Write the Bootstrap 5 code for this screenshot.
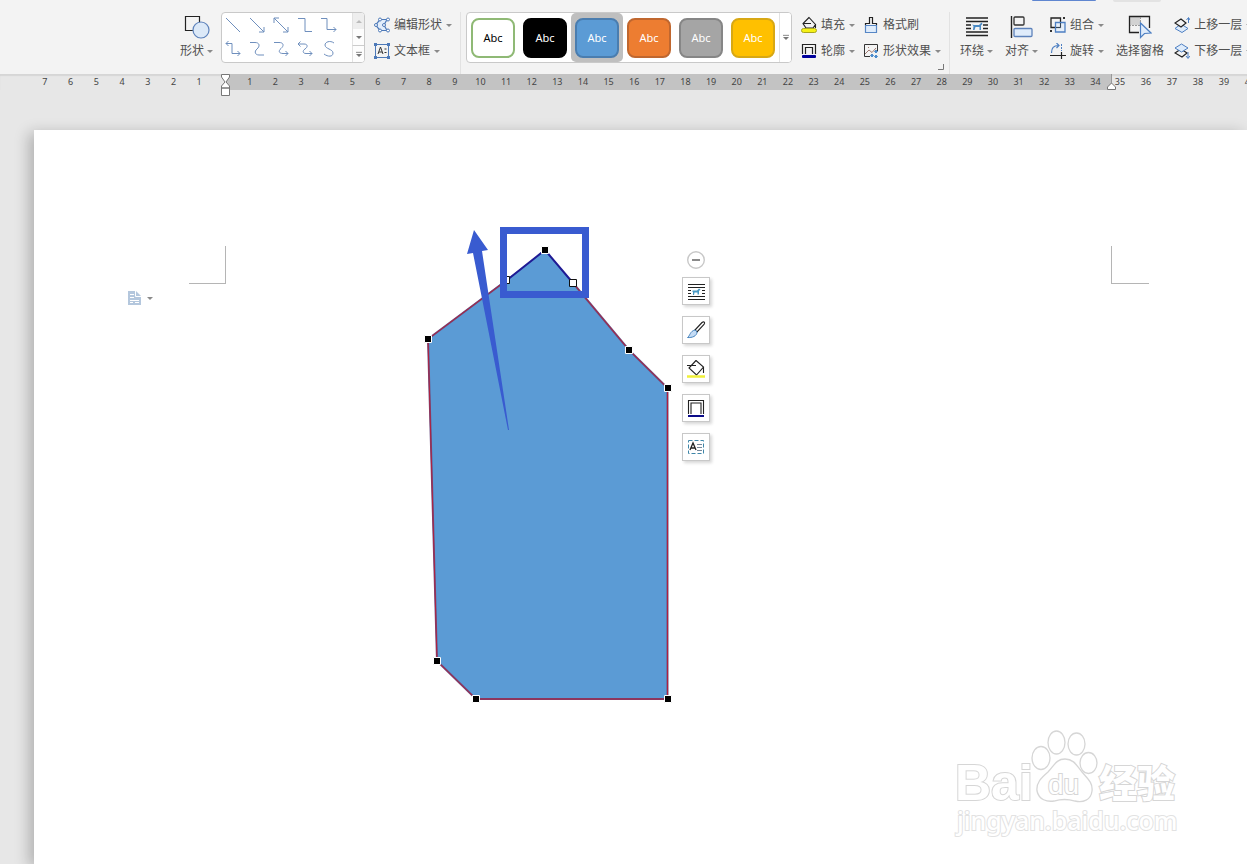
<!DOCTYPE html>
<html lang="zh-CN">
<head>
<meta charset="utf-8">
<meta name="viewport" content="width=device-width, initial-scale=1">
<title>文档</title>
<link rel="stylesheet" href="https://cdn.jsdelivr.net/npm/bootstrap@5.3.0/dist/css/bootstrap.min.css">
<style>
  body { background: #e7e7e7; font-family: "Liberation Sans", "Noto Sans CJK SC", sans-serif; font-size: 12px; color: #505050; overflow: hidden; }
  button { font: inherit; color: inherit; }
  svg { display: block; flex: none; fill: none; }
  .ribbon { background: #f3f3f3; height: 74px; padding: 12px 0 0 180px; overflow: hidden; }
  .ribbon > * { flex: none; }
  .sp5 { margin-left: 5px; } .sp8 { margin-left: 8px; } .sp9 { margin-left: 9px; } .sp10 { margin-left: 10px; } .sp12 { margin-left: 12px; }
  .tool { --bs-btn-font-size: 12px; --bs-btn-color: #505050; --bs-btn-padding-x: 0; --bs-btn-padding-y: 0; border: 0; border-radius: 0; line-height: 18px; white-space: nowrap; }
  .tool-row { display: flex; align-items: center; gap: 4px; height: 26px; }
  .tool-big { display: flex; flex-direction: column; align-items: center; gap: 3px; padding-top: 1px; }
  .tool-big span { display: flex; align-items: center; gap: 3px; }
  .caret::after { content: ""; border: 3px solid transparent; border-top-color: #8a8a8a; border-bottom: 0; }
  .rule { width: 1px; height: 62px; background: #e2e2e2; }
  .gallery { background: #fff; border: 1px solid #c9c9c9; border-radius: 4px; height: 51px; overflow: hidden; }
  .lines { width: 144px; }
  .line-grid { display: grid; grid-template-columns: repeat(5, 24px); grid-auto-rows: 24px; stroke: #6f8fbd; }
  .line-grid button { border: 0; padding: 0 2px 0 0; background: none; display: grid; place-items: center; }
  .scroller { width: 12px; background: #f6f6f6; display: flex; flex-direction: column; }
  .scroller button { flex: 1; border: 0; padding: 0; background: #fdfdfd; border-left: 1px solid #e2e2e2; display: grid; place-items: center; }
  .scroller button:first-child { background: #eee; }
  .scroller button:last-child { border-top: 1px solid #ccc; }
  .styles { width: 326px; }
  .styleset { display: grid; grid-template-columns: repeat(6, 52px); font-family: "Noto Sans", sans-serif; font-size: 11px; }
  .slot { border: 0; padding: 0; background: none; display: grid; place-items: center; border-radius: 5px; }
  .slot.on { background: #bfbfbf; }
  .chip { width: 44px; height: 40px; border-radius: 8px; border: 2px solid; line-height: 36px; color: #fff; }
  .c-green { background: #fff; border-color: #8fb975; color: #000; } .c-black { background: #000; border-color: #000; }
  .c-blue { background: #5b9bd5; border-color: #4a7daf; } .c-orange { background: #ed7d31; border-color: #c0672f; }
  .c-grey { background: #a5a5a5; border-color: #868686; } .c-gold { background: #ffc000; border-color: #d8a814; }
  .tab-bits { top: 0; right: 86px; gap: 17px; }
  .tab-bits i { width: 48px; height: 2px; background: #e3e3e3; border-radius: 0 0 6px 6px; }
  .tab-bits i:first-child { width: 64px; height: 1px; background: #5f86d0; }
  .launcher { left: 938px; top: 64px; }

  .ruler { height: 16px; font-family: "Noto Sans", sans-serif; font-size: 9px; line-height: 16px; box-shadow: inset 0 2px 1px #d6d6d6; overflow: visible; }
  .ruler span { flex: 1 1 0; text-align: center; color: #444; }
  .r-left { width: 225px; padding: 0 13px 0 32px; }
  .r-mid { width: 886px; padding: 0 3px 0 12px; background: #c3c3c3; }
  .r-right { flex: 1; min-width: 0; overflow: hidden; }
  .ruler .r-right span { flex: 0 0 26px; }
  .ruler .r-right span:first-child { margin-left: -4px; }
  .m-indent { left: 220px; top: 0; } .m-end { left: 1106px; top: 0; }

  .sheet { margin: 40px 0 0 34px; background: #fff; box-shadow: -5px 3px 14px rgba(0,0,0,.24); }
  .corner { width: 38px; height: 38px; border: 0 solid #b5b5b5; top: 116px; }
  .corner.tl { left: 155px; width: 37px; border-width: 0 1px 1px 0; }
  .corner.tr { left: 1077px; border-width: 0 0 1px 1px; }
  .paste { left: 93px; top: 155px; }
  .drawing { left: 380px; top: 90px; }
  .float-tools { left: 648px; top: 121px; }
  .float-tools .sq { width: 28px; height: 28px; margin-bottom: 11px; padding: 0; border: 1px solid #c8c8c8; background: #fff; display: grid; place-items: center; box-shadow: 2px 2px 3px rgba(0,0,0,.16); }
  .float-tools .round { border: 0; padding: 0; background: none; margin-bottom: 8px; }
  .logo { left: 916px; top: 590px; }
</style>
</head>
<body class="d-flex flex-column vh-100">
<svg width="0" height="0" class="position-absolute" aria-hidden="true">
  <symbol id="wrap" viewBox="0 0 22 20"><path d="M0 1.500h22M0 5h22M0 15.500h22M0 19h22M0 8.500h5M0 12h5M17 8.500h5M17 12h5" stroke="#222" stroke-width="1.300"/><path d="M6 8l2 .5h5l2.500-2.500 1 1.500-1.500 1.500v4.500h-1.500v-3h-4l-1 3H7l.5-4z" fill="#4a8ac4"/></symbol>
  <symbol id="more" viewBox="0 0 7 7"><path d="M0 1h7" stroke="#777"/><path d="M0 3h7L3.500 6.500z" fill="#777"/></symbol>
</svg>

<header class="ribbon d-flex align-items-start position-relative">
  <div class="tab-bits position-absolute d-flex"><i></i><i></i></div>
  <button class="btn tool tool-big">
    <svg width="26" height="26"><path d="M1.500 3.500h14v14h-14z" stroke="#222" stroke-width="1.200"/><circle cx="17" cy="17" r="8" fill="#dce9f8" stroke="#5d82bb" stroke-width="1.200"/></svg>
    <span class="caret">形状</span></button>
  <div class="gallery lines sp8 d-flex justify-content-between">
    <div class="line-grid">
      <button aria-label="直线"><svg width="16" height="16"><path d="M1 1l14 14"/></svg></button>
      <button aria-label="箭头"><svg width="16" height="16"><path d="M1 1l14 14M15 10v5h-5"/></svg></button>
      <button aria-label="双箭头"><svg width="16" height="16"><path d="M1 1l14 14M15 10v5h-5M1 6V1h5"/></svg></button>
      <button aria-label="肘形"><svg width="16" height="16"><path d="M1 1.500h7v13h7"/></svg></button>
      <button aria-label="肘形箭头"><svg width="16" height="16"><path d="M0 1.500h6v11h9M12.500 10l2.500 2.500-2.500 2.500"/></svg></button>
      <button aria-label="肘形双箭头"><svg width="16" height="16"><path d="M1 2.500h6v10h8M12.500 10l2.500 2.500-2.500 2.500M3.500 0L1 2.500 3.500 5"/></svg></button>
      <button aria-label="曲线"><svg width="16" height="16"><path d="M1 1.500h5c5 0 5 4 2 6.500s-2 6 2 6h5"/></svg></button>
      <button aria-label="曲线箭头"><svg width="16" height="16"><path d="M1 1.500h5c5 0 5 3.500 2 6s-2 5 2 5h5M12.500 10l2.500 2.500-2.500 2.500"/></svg></button>
      <button aria-label="曲线双箭头"><svg width="16" height="16"><path d="M1 3h6c4 0 4 3 1 5s-2 4.500 1 4.500h6M12.500 10l2.500 2.500-2.500 2.500M3.500.5L1 3l2.500 2.500"/></svg></button>
      <button aria-label="自由曲线"><svg width="16" height="16"><path d="M13 2C9-1 4 1 4 4c0 4 8 4 8 8s-5 4-9 1"/></svg></button>
    </div>
    <div class="scroller">
      <button aria-label="向上"><svg width="6" height="3"><path d="M0 3h6L3 0z" fill="#bbb"/></svg></button>
      <button aria-label="向下"><svg width="6" height="3"><path d="M0 0h6L3 3z" fill="#777"/></svg></button>
      <button aria-label="更多"><svg width="6" height="7"><use href="#more"/></svg></button>
    </div>
  </div>
  <div class="sp9">
    <button class="btn tool tool-row caret"><svg width="16" height="16"><path d="M13 2.500L6 2.500 1.500 8 6 13.500h7L10 8z" stroke="#4d79b8" stroke-width="1.200" fill="#e3eefb"/><g fill="#fff" stroke="#4d79b8"><circle cx="14" cy="2.500" r="1.500"/><circle cx="6" cy="2.500" r="1.500"/><circle cx="2" cy="8" r="1.500"/><circle cx="6" cy="13.500" r="1.500"/><circle cx="14" cy="13.500" r="1.500"/><circle cx="10" cy="8" r="1.500"/></g></svg>编辑形状</button>
    <button class="btn tool tool-row caret"><svg width="16" height="16"><path d="M1.500 1.500h13v13h-13z" stroke="#4d79b8"/><path d="M0 0h3v3H0zM13 0h3v3h-3zM0 13h3v3H0zM13 13h3v3h-3z" fill="#4d79b8"/><path d="M4 11l2.500-7L9 11M5 9h3M10.500 6h2M10.500 9.500h2" stroke="#333"/></svg>文本框</button>
  </div>
  <div class="rule sp8"></div>
  <div class="gallery styles sp5 d-flex">
    <div class="styleset">
      <button class="slot"><span class="chip c-green">Abc</span></button>
      <button class="slot"><span class="chip c-black">Abc</span></button>
      <button class="slot on"><span class="chip c-blue">Abc</span></button>
      <button class="slot"><span class="chip c-orange">Abc</span></button>
      <button class="slot"><span class="chip c-grey">Abc</span></button>
      <button class="slot"><span class="chip c-gold">Abc</span></button>
    </div>
    <div class="scroller"><button aria-label="更多样式" class="border-top-0 bg-white"><svg width="6" height="7"><use href="#more"/></svg></button></div>
  </div>
  <div class="sp9">
    <button class="btn tool tool-row caret"><svg width="16" height="18"><path d="M8 1.500L2 7.500 5 12h7l2.500-3.500zM2 7.500h8M14.500 8v4" stroke="#222" stroke-width="1.100"/><rect x=".5" y="12.500" width="15" height="4" rx="2" fill="#f5f116" stroke="#a9a61d"/></svg>填充</button>
    <button class="btn tool tool-row caret"><svg width="16" height="16"><path d="M1.500 11V1.500h13V11M4.500 11V4.500h7V11" stroke="#222" stroke-width="1.200"/><rect x="1" y="12" width="14" height="3" rx="1" fill="#00009c"/></svg>轮廓</button>
  </div>
  <div class="sp8">
    <button class="btn tool tool-row"><svg width="16" height="18"><path d="M2.500 9V7.500h4V1.500h3v6h4V9" stroke="#222" stroke-width="1.200"/><path d="M2.500 9.500h11v7h-11z" fill="#dfecfb" stroke="#5686c5" stroke-width="1.200"/></svg>格式刷</button>
    <button class="btn tool tool-row caret"><svg width="16" height="16"><path d="M7 13.500H1.500v-12h13V8" stroke="#333"/><path d="M2 11l4-4 3 2.500L13 5M5 4.500h1" stroke="#a07a70"/><path d="M13 7l1.500 1.500L13 10l-1.500-1.500zM9 11l1.500 1.500L9 14l-1.500-1.500zM13 12l1.500 1.500L13 15l-1.500-1.500z" fill="#4c8ccc" stroke="#4c8ccc"/></svg>形状效果</button>
  </div>
  <svg class="launcher position-absolute" width="7" height="7"><path d="M5.500 0v5.500H0" stroke="#777"/></svg>
  <div class="rule sp8"></div>
  <button class="btn tool tool-big sp10"><svg width="22" height="26"><use href="#wrap" y="3" width="22" height="21"/></svg><span class="caret">环绕</span></button>
  <button class="btn tool tool-big sp12"><svg width="23" height="26"><path d="M1.500 3v22" stroke="#222" stroke-width="1.400"/><rect x="4" y="4" width="10" height="8" rx="1" stroke="#333" stroke-width="1.300"/><rect x="4" y="15.500" width="18" height="8" rx="1" fill="#dfecfb" stroke="#5d82bb" stroke-width="1.300"/></svg><span class="caret">对齐</span></button>
  <div class="sp12">
    <button class="btn tool tool-row caret"><svg width="16" height="16"><path d="M1 1h9.500v9.500H1z" stroke="#222" stroke-width="1.300"/><path d="M5.500 5.500H15V15H5.500z" fill="#dfecfb" fill-opacity=".7" stroke="#4d7fc2" stroke-width="1.300"/><path d="M6 10.500h4.500V6" stroke="#345"/><path d="M13 0h2v2h-2zM0 13h2v2H0z" fill="#333"/></svg>组合</button>
    <button class="btn tool tool-row caret"><svg width="16" height="16"><path d="M1.500 10c0-5 2-7.500 7-7.500M6.500 0l2.500 2.500L6.500 5" stroke="#4d7fc2" stroke-width="1.200"/><path d="M0 12.500h16M11.500 9v7" stroke="#222" stroke-width="1.200"/><path d="M11.500 1v7" stroke="#4d7fc2" stroke-dasharray="2 1"/></svg>旋转</button>
  </div>
  <button class="btn tool tool-big sp12"><svg width="24" height="26"><path d="M2 4h10v8H2z" fill="#d2d2d2"/><path d="M11 19.500H1.500v-16h20V15" stroke="#222" stroke-width="1.300"/><path d="M12.500 4v8.500H2" stroke="#999" stroke-dasharray="2 1"/><path d="M12.500 10v14.500l4-4 6.500-.5z" fill="#dfecfb" stroke="#4d7fc2" stroke-width="1.200"/></svg><span>选择窗格</span></button>
  <div class="sp10">
    <button class="btn tool tool-row caret"><svg width="16" height="16"><path d="M7 7l7 4.500-6 4-7-4z" fill="#dfecfb" stroke="#4d7fc2"/><path d="M7 2l5 4-5 4-6-4z" fill="#f3f3f3" stroke="#222" stroke-width="1.200"/><path d="M14.500 6V1M12.500 3l2-2.500L16 3" stroke="#4d7fc2"/></svg>上移一层</button>
    <button class="btn tool tool-row caret"><svg width="16" height="16"><path d="M7 6l6 4-5 4-7-4z" fill="#f3f3f3" stroke="#222" stroke-width="1.200"/><path d="M7.500 1l6.500 4-6.500 4L1 5z" fill="#dfecfb" stroke="#4d7fc2"/><path d="M14 9v6M12 13l2 2.500 2-2.500" stroke="#4d7fc2"/></svg>下移一层</button>
  </div>
</header>

<div class="ruler d-flex position-relative">
  <div class="r-left d-flex" data-from="7" data-to="1"></div>
  <div class="r-mid d-flex" data-from="1" data-to="34"></div>
  <div class="r-right d-flex" data-from="35" data-to="40"></div>
  <svg class="m-indent position-absolute" width="11" height="23"><path d="M1.500.5h8v2.500L6 8l3.500 4v2h-8v-2L5 8 1.500 3zM1.500 14h8v7.500h-8z" fill="#fff" stroke="#777"/></svg>
  <svg class="m-end position-absolute" width="11" height="17"><path d="M5.500 0v9" stroke="#999"/><path d="M1.500 15.500v-2.500l4-4 4 4v2.500z" fill="#fff" stroke="#777"/></svg>
</div>

<main class="sheet flex-fill position-relative">
  <div class="corner tl position-absolute"></div>
  <div class="corner tr position-absolute"></div>
  <button class="btn tool tool-row caret paste position-absolute" aria-label="段落布局"><svg width="16" height="16"><path d="M1 1h8l5 5v9H1z" fill="#b4c7dd"/><path d="M8.500 1v5.500H14M3 4.500h4M3 7.500h4M3 10.500h9M3 12.500h3M8 12.500h4" stroke="#fff"/></svg></button>

  <svg class="drawing position-absolute" width="320" height="500" viewBox="414 220 320 500">
    <path d="M428 339L545 250 573 283 629 350 668 388V699H476L437 661Z" fill="#5b9bd5"/>
    <path d="M507 280L428 339 437 661 476 699H667.500V388L629 350 573 283" stroke="#6b4f80" stroke-width="2"/>
    <path d="M507 280L428 339 437 661 476 699H667.500V388L629 350 573 283" stroke="#b0213f"/>
    <path d="M507 280L545 250 573 283" stroke="#1f1a94" stroke-width="2"/>
    <path d="M503.500 276.500h6v7h-6zM569.500 279.500h7v7h-7z" fill="#fff" stroke="#111"/>
    <path d="M503.500 230.500h82v64h-82z" stroke="#395bd0" stroke-width="7"/>
    <path d="M474 230L488 250 482 251 509 430 508 430 473 253 467 254Z" fill="#395bd0"/>
    <g fill="#000" stroke="#fff"><path d="M541.500 246.500h7v7h-7zM424.500 335.500h7v7h-7zM625.500 346.500h7v7h-7zM664.500 384.500h7v7h-7zM664.500 695.500h7v7h-7zM472.500 695.500h7v7h-7zM433.500 657.500h7v7h-7z"/></g>
  </svg>

  <div class="float-tools position-absolute d-flex flex-column align-items-center">
    <button class="round" aria-label="收起"><svg width="18" height="18"><circle cx="9" cy="9" r="8.300" stroke="#c8c8c8" stroke-width="1.400"/><path d="M5 9h8" stroke="#8a8a8a" stroke-width="2"/></svg></button>
    <button class="sq" aria-label="环绕"><svg width="17" height="17"><path d="M0 1.500h17M0 4.500h17M0 13.500h17M0 16.500h17M0 7.500h3M0 10.500h3M14 7.500h3M14 10.500h3" stroke="#222"/><path d="M4 8l1-.5h4l2-2 1.500 1-1.500 1.500v3.500H9.500V9.500h-3L6 12H5V9z" fill="#4a9ac4"/></svg></button>
    <button class="sq" aria-label="样式"><svg width="20" height="20"><path d="M9 10l7-7.500c2-1.500 3.500 0 2 2L11 12z" stroke="#222" stroke-width="1.100"/><path d="M9 10l2 2c0 4-5 6-9.500 5.500C4 16 4 11 9 10z" fill="#c5dcf5" stroke="#4784bd"/></svg></button>
    <button class="sq" aria-label="填充"><svg width="20" height="20"><path d="M10 1.500l7.500 6.500-7 8L3 9l7-7.500M1 6.500h9M17.500 8v6" stroke="#222" stroke-width="1.100"/><path d="M1 17.500h18" stroke="#f0f03a" stroke-width="2.500"/></svg></button>
    <button class="sq" aria-label="轮廓"><svg width="18" height="18"><path d="M1.500 15V1.500h15V15M4 15V4h10v11" stroke="#222" stroke-width="1.100"/><path d="M1 17h16" stroke="#0b0b88" stroke-width="2"/></svg></button>
    <button class="sq" aria-label="文本框"><svg width="18" height="16"><path d="M1.500 1.500h15v13h-15z" stroke="#3f86a8" stroke-dasharray="4 2"/><path d="M3 11l3-7 3 7M4 9h4" stroke="#222" stroke-width="1.300"/><path d="M10 5.500h5M10 8.500h5M10 11.500h5" stroke="#789"/></svg></button>
  </div>

  <svg class="logo position-absolute" width="250" height="124" viewBox="950 720 250 124" font-weight="700">
    <g fill="#fff" stroke="#d6d6d6" stroke-width="1.300">
      <ellipse cx="1041" cy="758" rx="9" ry="11.500"/><ellipse cx="1056.500" cy="742.500" rx="8.500" ry="11.500"/><ellipse cx="1076.500" cy="744" rx="8.500" ry="11"/><ellipse cx="1088.500" cy="763" rx="8.500" ry="10.500"/>
      <path d="M1065 759c-9 0-11 7-17 13-7 6-12 11-11 19 2 9 10 11 17 10 7-2 14-2 21 0 8 2 16-1 17-10 1-8-4-12-10-19-5-6-8-13-17-13z"/>
      <g stroke-width="2" paint-order="stroke">
        <text x="955" y="800" font-family="Liberation Sans, sans-serif" font-size="50">Bai</text>
        <text x="1048" y="794" font-family="Liberation Sans, sans-serif" font-size="28" font-weight="400">du</text>
        <text x="1099" y="797" font-family="Noto Sans CJK SC, sans-serif" font-size="38" font-weight="900">经验</text>
        <text x="957" y="830" font-family="Noto Sans, sans-serif" font-size="25" font-weight="500" stroke="#e2e2e2">jingyan.baidu.com</text>
      </g>
    </g>
  </svg>
</main>

<script>
  document.querySelectorAll('[data-from]').forEach(function (part) {
    var n = +part.dataset.from, end = +part.dataset.to, step = n > end ? -1 : 1;
    for (; n !== end + step; n += step) {
      var label = document.createElement('span');
      label.textContent = n;
      part.append(label);
    }
  });
</script>
<script src="https://cdn.jsdelivr.net/npm/bootstrap@5.3.0/dist/js/bootstrap.bundle.min.js"></script>
</body>
</html>
